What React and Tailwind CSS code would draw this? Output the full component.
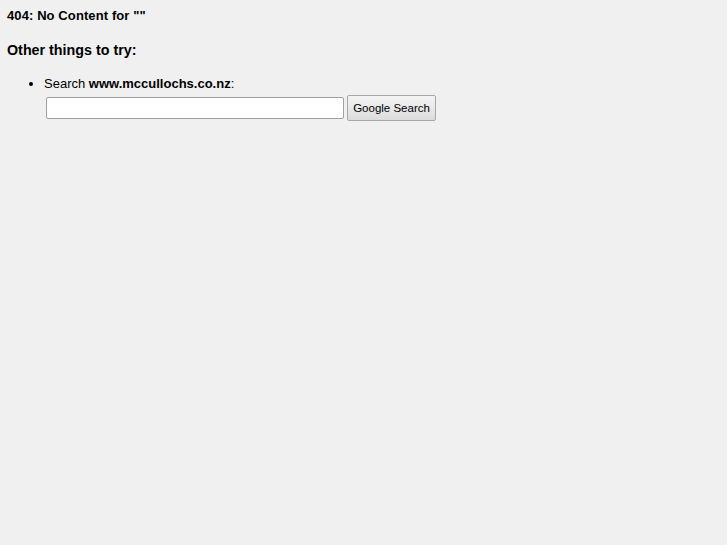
export default function App() {
  return (
    <div className="min-h-[545px] bg-[#f0f0f0] px-[7px] pt-[8px] text-black" style={{ fontFamily: '"Liberation Sans", Arial, sans-serif' }}>
      <h1 className="text-[13px] font-bold leading-[15px] tracking-[0.1px]">404: No Content for ""</h1>
      <h2 className="mt-[18px] text-[14.3px] font-bold leading-[18px]">Other things to try:</h2>
      <ul className="mt-[17px] list-disc pl-[37px] text-[13px] leading-[16px]">
        <li>
          Search <b>www.mccullochs.co.nz</b>:
          <div className="mt-[3px] ml-[2px] flex items-center gap-[3px]">
            <input className="h-[22px] w-[298px] rounded-[2px] border border-[#a0a0a0] bg-white" />
            <button className="h-[26px] w-[89px] rounded-[2px] border border-[#a8a8a8] bg-gradient-to-b from-[#f4f4f4] to-[#dcdcdc] text-[11.5px]">Google Search</button>
          </div>
        </li>
      </ul>
    </div>
  )
}
